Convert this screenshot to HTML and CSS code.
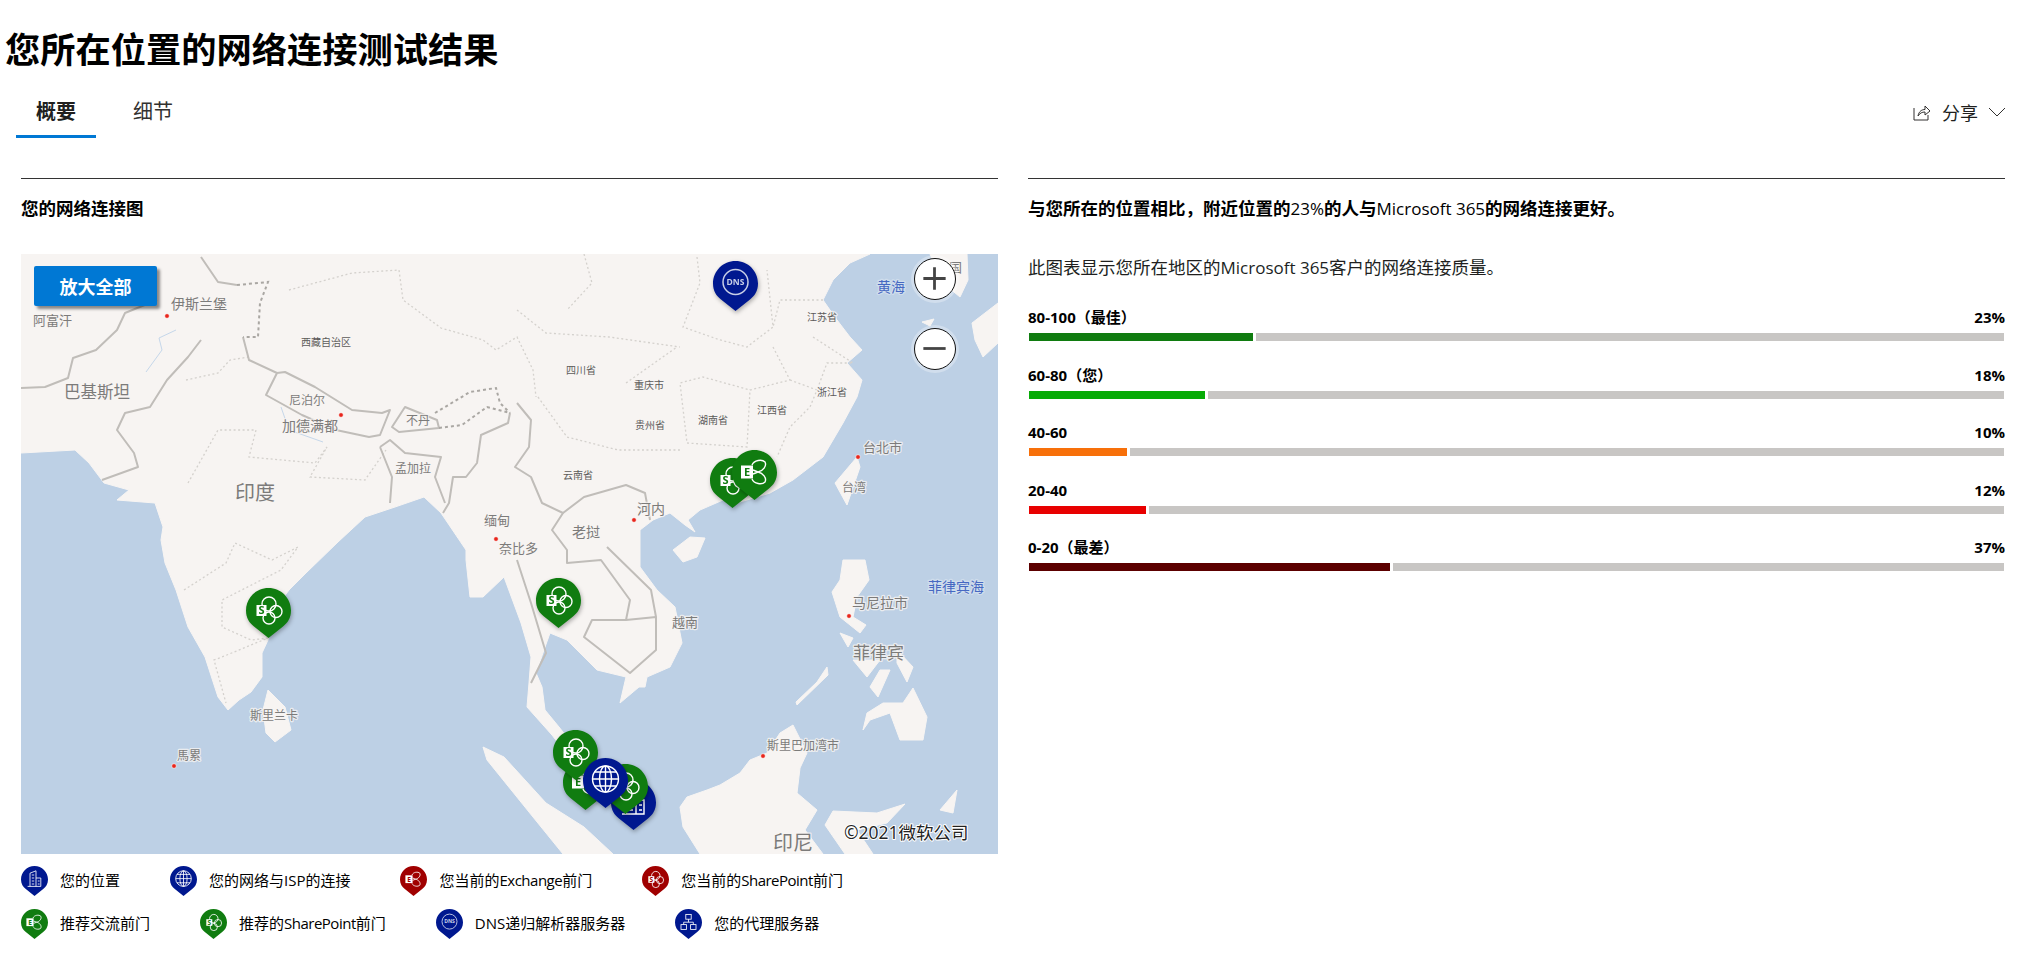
FILE: index.html
```html
<!DOCTYPE html>
<html lang="zh-CN">

<head>
    <meta charset="UTF-8">
    <meta name="viewport" content="width=device-width, initial-scale=1.0">
    <title>您所在位置的网络连接测试结果</title>
    <link rel="stylesheet" href="styles.css">
</head>

<body>
    <!-- shared pin shape and icons, used by the map and the legend -->
    <svg class="defs">
        <defs>
            <path id="pin" class="pin-shape" d="M22.5 0C35 0 45 10 45 22.5C45 30 41.500 35 37 38.500L22.500 50L8 38.500C3.500 35 0 30 0 22.500C0 10 10 0 22.500 0Z"/>
            <g id="icon-sp">
                <circle class="icon-line" cx="23" cy="16" r="7"/>
                <circle class="icon-line" cx="30" cy="23.500" r="6"/>
                <circle class="icon-line" cx="23" cy="30" r="6"/>
                <rect class="icon-fill" x="10.500" y="17" width="10" height="11"/>
                <text class="icon-letter" x="15.500" y="26">S</text>
            </g>
            <g id="icon-ex">
                <path class="icon-line" d="M20 15C22 10 30 9 33 12C35 16 31 21 26 22C31 23 35 28 33 32C30 35 22 34 20 29"/>
                <path class="icon-line" d="M26 22L21 20M26 22L21 24"/>
                <rect class="icon-fill" x="9" y="15.500" width="12" height="13"/>
                <text class="icon-letter" x="15" y="26">E</text>
            </g>
            <g id="icon-globe">
                <circle class="icon-line" cx="22.500" cy="21" r="13"/>
                <ellipse class="icon-line" cx="22.500" cy="21" rx="6" ry="13"/>
                <path class="icon-line" d="M22.500 8V34M9.500 21H35.500M11.500 14H33.500M11.500 28H33.500"/>
            </g>
            <g id="icon-dns">
                <circle class="icon-line icon-soft" cx="22.500" cy="21" r="12.500"/>
                <text class="icon-dns-text" x="22.500" y="24">DNS</text>
            </g>
            <g id="icon-building">
                <path class="icon-line" d="M15 34V12L25 8V34M25 20H33V34H11"/>
                <path class="icon-line" d="M18 15H22M18 20H22M18 25H22M18 30H22M28 25H31M28 30H31"/>
            </g>
            <g id="icon-proxy">
                <rect class="icon-line" x="18" y="9" width="9" height="8"/>
                <rect class="icon-line" x="10" y="26" width="9" height="8"/>
                <rect class="icon-line" x="26" y="26" width="9" height="8"/>
                <path class="icon-line" d="M22.500 17V22M14.500 26V22H30.500V26"/>
            </g>
        </defs>
    </svg>

    <h1 class="page-title">您所在位置的网络连接测试结果</h1>

    <div class="tabs-row">
        <div class="tabs">
            <div class="tab tab-active">概要</div>
            <div class="tab">细节</div>
        </div>
        <div class="share">
            <svg class="share-icon" viewBox="0 0 18 17">
                <path d="M1 4V16H15V11M5 12C6 7 9 5.500 12 5.500V2L17 7L12 11V8C9 8 7 9 5 12Z"/>
            </svg>
            <span>分享</span>
            <svg class="share-chevron" viewBox="0 0 18 10">
                <path d="M1 1L9 9L17 1"/>
            </svg>
        </div>
    </div>

    <div class="columns">
        <section class="col-map">
            <h2 class="col-title">您的网络连接图</h2>

            <div class="map">
                <svg class="map-svg" viewBox="21 254 977 600">
                    <g class="land">
                        <path d="M21 254L870 254L850 263L833 280L823 300L837 320L850 337L862 350L847 363L862 380L857 397L843 423L823 457L793 480L770 493L740 502L723 500L700 510L688 520L695 532L685 525L670 513L653 520L640 530L640 567L657 590L675 607L682 643L670 667L647 677L645 687L639 687L620 703L626 677L597 670L584 657L567 640L550 633L544 650L536 673L542 687L545 710L559 727L585 760L600 785L590 790L575 765L552 735L527 707L529 683L531 657L521 623L504 577L483 597L470 597L466 560L466 550L441 513L424 497L395 507L365 517L338 542L306 573L289 590L272 613L268 640L262 653L262 677L251 692L239 700L228 710L218 697L205 657L188 627L176 590L165 563L161 540L163 527L155 503L117 500L129 490L104 483L89 463L75 450L21 453Z"/>
                        <path d="M268 690L285 707L291 730L275 742L266 733L263 710Z"/>
                        <path d="M483 747L504 757L546 803L584 827L613 854L563 854L533 817L487 760Z"/>
                        <path d="M673 550L690 537L705 538L697 557L683 562Z"/>
                        <path d="M857 457L860 467L847 505L835 483Z"/>
                        <path d="M843 560L865 560L869 580L857 597L853 617L866 625L860 633L840 617L832 592L840 580Z"/>
                        <path d="M840 633L853 638L848 647Z"/>
                        <path d="M897 650L913 667L907 682L897 663Z"/>
                        <path d="M853 660L880 660L867 677Z"/>
                        <path d="M880 670L890 670L878 697L870 687Z"/>
                        <path d="M913 688L927 717L923 740L900 740L890 713L870 720L863 730L867 713L883 703L903 703Z"/>
                        <path d="M827 667L828 675L797 705L796 702L817 682Z"/>
                        <path d="M680 807L687 797L707 790L720 785L740 773L750 760L767 753L780 733L793 725L807 753L800 768L797 793L817 810L805 830L823 854L700 854L683 827Z"/>
                        <path d="M833 811L877 813L905 804L887 823L857 830L873 854L845 854L825 825Z"/>
                        <path d="M940 810L957 790L953 813Z"/>
                        <path d="M930 254L943 283L960 297L968 280L967 254Z"/>
                        <path d="M972 323L998 303L998 343L983 357L975 340Z"/>
                        <path d="M922 322L934 319L930 326Z"/>
                    </g>

                    <g class="rivers">
                        <path d="M176 330L159 338L162 350L146 372"/>
                        <path d="M281 407L289 430L323 442"/>
                    </g>

                    <g class="provinces">
                        <path d="M289 290L352 273L399 270L403 300L441 328L483 340L496 350L517 337L533 370L536 397"/>
                        <path d="M517 310L546 333L609 337L680 347M584 254L592 283L567 310"/>
                        <path d="M626 383L677 347M538 397L567 437L618 450L680 450"/>
                        <path d="M697 257L700 283L683 327L720 340L747 347L773 327L767 270"/>
                        <path d="M773 347L790 380L750 390L747 447L687 443L680 383L703 377L750 390"/>
                        <path d="M790 380L817 390L810 407L790 427L777 457M813 337L853 363L827 363L817 390"/>
                        <path d="M823 300L780 300L773 327"/>
                        <path d="M186 380L218 373L230 360L249 357M188 483L218 430L256 430L249 457L315 463L327 447L310 477L365 480L386 450"/>
                        <path d="M184 590L226 563L235 543L272 560L298 547L281 570L222 600L222 627L251 640L268 638L222 657L214 660L226 703"/>
                    </g>

                    <g class="borders">
                        <path d="M21 388L45 387L68 378L73 358L96 350L117 330L125 313L157 300"/>
                        <path d="M201 257L218 282L237 285"/>
                        <path d="M201 340L188 357L167 380L150 407L125 413L117 430L134 453L138 467L102 480"/>
                        <path d="M243 337L249 360L277 373L285 372L315 387L352 410L382 413L390 410L380 435L369 437L336 430L302 415L266 395L277 373"/>
                        <path d="M392 427L405 407L437 420L439 428L399 432Z"/>
                        <path d="M517 403L531 420L529 447L515 467L531 477L542 503L563 513L584 497L626 485L645 493L650 520"/>
                        <path d="M563 513L552 530L567 550L567 563L601 560L630 600L626 620L592 620L584 637L630 673L656 650L656 617L626 620"/>
                        <path d="M607 547L651 590L656 617"/>
                        <path d="M510 413L508 423L481 435L477 463L466 477L453 477L449 503L443 513"/>
                        <path d="M380 447L390 440L405 453L441 457L435 477L445 503M380 447L392 477L390 503"/>
                        <path d="M517 560L531 603L546 653L531 683"/>
                    </g>

                    <g class="disputed">
                        <path d="M237 285L268 282L260 303L258 337L243 337"/>
                        <path d="M439 428L462 425L487 407L510 413M435 413L470 392L496 388L500 403L510 413"/>
                    </g>

                    <g class="cities">
                        <circle cx="167" cy="316" r="2.300"/>
                        <circle cx="341" cy="415" r="2.300"/>
                        <circle cx="496" cy="539" r="2.300"/>
                        <circle cx="634" cy="520" r="2.300"/>
                        <circle cx="858" cy="457" r="2.300"/>
                        <circle cx="849" cy="616" r="2.300"/>
                        <circle cx="174" cy="766" r="2.300"/>
                        <circle cx="763" cy="756" r="2.300"/>
                    </g>

                    <text class="label size-14" x="171" y="309">伊斯兰堡</text>
                    <text class="label size-13" x="33" y="325">阿富汗</text>
                    <text class="label label-dark size-10" x="301" y="346">西藏自治区</text>
                    <text class="label size-16" x="64" y="398">巴基斯坦</text>
                    <text class="label label-dark size-10" x="566" y="374">四川省</text>
                    <text class="label label-dark size-10" x="634" y="389">重庆市</text>
                    <text class="label size-12" x="289" y="405">尼泊尔</text>
                    <text class="label size-14" x="282" y="431">加德满都</text>
                    <text class="label size-12" x="406" y="425">不丹</text>
                    <text class="label label-dark size-10" x="635" y="429">贵州省</text>
                    <text class="label size-12" x="395" y="473">孟加拉</text>
                    <text class="label label-dark size-10" x="563" y="479">云南省</text>
                    <text class="label size-20" x="235" y="500">印度</text>
                    <text class="label size-14" x="637" y="514">河内</text>
                    <text class="label size-13" x="484" y="525">缅甸</text>
                    <text class="label size-14" x="572" y="537">老挝</text>
                    <text class="label size-13" x="499" y="553">奈比多</text>
                    <text class="label size-13" x="672" y="627">越南</text>
                    <text class="label size-12" x="250" y="720">斯里兰卡</text>
                    <text class="label size-12" x="177" y="760">馬累</text>
                    <text class="label size-12" x="767" y="750">斯里巴加湾市</text>
                    <text class="label size-20" x="773" y="850">印尼</text>
                    <text class="label label-sea size-14" x="877" y="292">黄海</text>
                    <text class="label label-dark size-10" x="807" y="321">江苏省</text>
                    <text class="label label-dark size-10" x="817" y="396">浙江省</text>
                    <text class="label label-dark size-10" x="757" y="414">江西省</text>
                    <text class="label label-dark size-10" x="698" y="424">湖南省</text>
                    <text class="label size-13" x="863" y="452">台北市</text>
                    <text class="label size-12" x="842" y="492">台湾</text>
                    <text class="label size-14" x="852" y="608">马尼拉市</text>
                    <text class="label size-17" x="853" y="659">菲律宾</text>
                    <text class="label label-sea size-14" x="928" y="592">菲律宾海</text>
                    <text class="label size-13" x="936" y="272">韩国</text>
                    <text class="copyright" x="844" y="839">©2021微软公司</text>

                    <g class="map-pin pin-blue" transform="translate(713 261)"><use href="#pin"/><use href="#icon-dns"/></g>
                    <g class="map-pin pin-green" transform="translate(710 458)"><use href="#pin"/><use href="#icon-sp"/></g>
                    <g class="map-pin pin-green" transform="translate(732 450)"><use href="#pin"/><use href="#icon-ex"/></g>
                    <g class="map-pin pin-green" transform="translate(246 588)"><use href="#pin"/><use href="#icon-sp"/></g>
                    <g class="map-pin pin-green" transform="translate(536 578)"><use href="#pin"/><use href="#icon-sp"/></g>
                    <g class="map-pin pin-blue" transform="translate(611 780)"><use href="#pin"/><use href="#icon-building"/></g>
                    <g class="map-pin pin-green" transform="translate(563 760)"><use href="#pin"/><use href="#icon-ex"/></g>
                    <g class="map-pin pin-green" transform="translate(603 764)"><use href="#pin"/><use href="#icon-sp"/></g>
                    <g class="map-pin pin-green" transform="translate(553 730)"><use href="#pin"/><use href="#icon-sp"/></g>
                    <g class="map-pin pin-blue" transform="translate(583 758)"><use href="#pin"/><use href="#icon-globe"/></g>
                </svg>

                <button class="zoom-all">放大全部</button>
                <div class="zoom-btn zoom-in">
                    <svg viewBox="0 0 42 42"><path d="M9 21H33M21 9V33"/></svg>
                </div>
                <div class="zoom-btn zoom-out">
                    <svg viewBox="0 0 42 42"><path d="M9 21H33"/></svg>
                </div>
            </div>

            <div class="legend">
                <div class="legend-item">
                    <svg class="legend-pin pin-blue" viewBox="0 0 45 50"><use href="#pin"/><use href="#icon-building"/></svg>
                    <span>您的位置</span>
                </div>
                <div class="legend-item">
                    <svg class="legend-pin pin-blue" viewBox="0 0 45 50"><use href="#pin"/><use href="#icon-globe"/></svg>
                    <span>您的网络与ISP的连接</span>
                </div>
                <div class="legend-item">
                    <svg class="legend-pin pin-red" viewBox="0 0 45 50"><use href="#pin"/><use href="#icon-ex"/></svg>
                    <span>您当前的<i class="latin">Exchange</i>前门</span>
                </div>
                <div class="legend-item">
                    <svg class="legend-pin pin-red" viewBox="0 0 45 50"><use href="#pin"/><use href="#icon-sp"/></svg>
                    <span>您当前的<i class="latin">SharePoint</i>前门</span>
                </div>
                <div class="legend-item">
                    <svg class="legend-pin pin-green" viewBox="0 0 45 50"><use href="#pin"/><use href="#icon-ex"/></svg>
                    <span>推荐交流前门</span>
                </div>
                <div class="legend-item">
                    <svg class="legend-pin pin-green" viewBox="0 0 45 50"><use href="#pin"/><use href="#icon-sp"/></svg>
                    <span>推荐的<i class="latin">SharePoint</i>前门</span>
                </div>
                <div class="legend-item">
                    <svg class="legend-pin pin-blue" viewBox="0 0 45 50"><use href="#pin"/><use href="#icon-dns"/></svg>
                    <span>DNS递归解析器服务器</span>
                </div>
                <div class="legend-item">
                    <svg class="legend-pin pin-blue" viewBox="0 0 45 50"><use href="#pin"/><use href="#icon-proxy"/></svg>
                    <span>您的代理服务器</span>
                </div>
            </div>
        </section>

        <section class="col-quality">
            <h2 class="col-title">与您所在的位置相比，附近位置的<span class="plain">23%</span>的人与<span class="plain">Microsoft 365</span>的网络连接更好。</h2>
            <p class="intro">此图表显示您所在地区的<span class="plain">Microsoft 365</span>客户的网络连接质量。</p>

            <div class="score">
                <div class="score-head"><span>80-100（最佳）</span><span>23%</span></div>
                <div class="score-bar"><div class="score-fill fill-best" style="width: 23%"></div><div class="score-rest"></div></div>
            </div>
            <div class="score">
                <div class="score-head"><span>60-80（您）</span><span>18%</span></div>
                <div class="score-bar"><div class="score-fill fill-good" style="width: 18%"></div><div class="score-rest"></div></div>
            </div>
            <div class="score">
                <div class="score-head"><span>40-60</span><span>10%</span></div>
                <div class="score-bar"><div class="score-fill fill-mid" style="width: 10%"></div><div class="score-rest"></div></div>
            </div>
            <div class="score">
                <div class="score-head"><span>20-40</span><span>12%</span></div>
                <div class="score-bar"><div class="score-fill fill-low" style="width: 12%"></div><div class="score-rest"></div></div>
            </div>
            <div class="score">
                <div class="score-head"><span>0-20（最差）</span><span>37%</span></div>
                <div class="score-bar"><div class="score-fill fill-worst" style="width: 37%"></div><div class="score-rest"></div></div>
            </div>
        </section>
    </div>
</body>

</html>
```

FILE: styles.css
```css
* {
    margin: 0;
    padding: 0;
    box-sizing: border-box;
}

body {
    background-color: #fff;
    color: #000;
    font-family: "Open Sans", "Noto Sans CJK SC", sans-serif;
    overflow: hidden;
}

.defs {
    display: none;
}

.page-title {
    margin: 26px 0 0 5px;
    font-size: 35.250px;
    line-height: 46px;
    font-weight: 700;
}

.tabs-row {
    display: flex;
    justify-content: space-between;
    margin: 20px 18px 0 16px;
}

.tabs {
    display: flex;
    gap: 17px;
}

.tab {
    padding: 6px 20px 12px 20px;
    font-size: 20px;
    line-height: 28px;
    color: #323130;
}

.tab-active {
    padding-bottom: 9px;
    border-bottom: 3px solid #0078d4;
    font-weight: 600;
    color: #201f1e;
}

.share {
    display: flex;
    align-items: center;
    height: 40px;
    font-size: 18px;
    color: #201f1e;
}

.share-icon {
    width: 18px;
    height: 17px;
    margin-right: 11px;
    fill: none;
    stroke: #323130;
    stroke-width: 1;
}

.share-chevron {
    width: 18px;
    height: 10px;
    margin-left: 10px;
    fill: none;
    stroke: #323130;
    stroke-width: 1;
}

.columns {
    display: flex;
    gap: 30px;
    margin: 40px 19px 0 21px;
}

.col-map {
    width: 977px;
    flex: none;
    border-top: 1px solid #333;
}

.col-quality {
    flex: 1;
    border-top: 1px solid #333;
}

.col-title {
    padding-top: 17px;
    font-size: 17.500px;
    line-height: 24px;
    font-weight: 700;
}

.plain {
    font-size: 17px;
    font-weight: 400;
}

/* map */
.map {
    position: relative;
    width: 977px;
    height: 600px;
    margin-top: 34px;
    background-color: #bdd0e5;
}

.map-svg {
    display: block;
    width: 977px;
    height: 600px;
}

.land {
    filter: blur(0.6px);
}

.land path {
    fill: #f7f4f2;
    stroke: #f7f4f2;
    stroke-width: 1;
    stroke-linejoin: round;
}

.rivers path {
    fill: none;
    stroke: #c5d7ea;
    stroke-width: 1;
}

.provinces {
    filter: blur(0.4px);
}

.provinces path {
    fill: none;
    stroke: #d4d1cd;
    stroke-width: 1.300;
    stroke-dasharray: 2 2.500;
}

.borders {
    filter: blur(0.6px);
}

.borders path {
    fill: none;
    stroke: #c0bdb9;
    stroke-width: 2;
    stroke-linejoin: round;
}

.disputed {
    filter: blur(0.4px);
}

.disputed path {
    fill: none;
    stroke: #aaa7a3;
    stroke-width: 2;
    stroke-dasharray: 3 3;
}

.cities circle {
    fill: #e8261c;
    stroke: #fff;
    stroke-opacity: 0.7;
    stroke-width: 0.800;
}

.label {
    fill: #7c7b7a;
    stroke: #f7f4f2;
    stroke-width: 2.500;
    stroke-opacity: 0.8;
    paint-order: stroke;
    stroke-linejoin: round;
}

.label-dark {
    fill: #5c5b5a;
}

.label-sea {
    fill: #4668c2;
    stroke: #d5e1ee;
}

.size-10 { font-size: 10px; }
.size-12 { font-size: 12px; }
.size-13 { font-size: 13px; }
.size-14 { font-size: 14px; }
.size-16 { font-size: 16.500px; }
.size-17 { font-size: 17px; }
.size-20 { font-size: 20px; }

.copyright {
    font-size: 17.500px;
    fill: #222;
    stroke: #fff;
    stroke-width: 2;
    paint-order: stroke;
    stroke-linejoin: round;
}

.map-pin {
    filter: drop-shadow(1px 2px 2px rgba(0, 0, 0, 0.3));
}

.pin-shape {
    fill: var(--pin);
}

.pin-blue { --pin: #00188f; }
.pin-green { --pin: #107c10; }
.pin-red { --pin: #a00000; }

.icon-line {
    fill: none;
    stroke: #fff;
    stroke-width: 1.400;
}

.icon-soft {
    stroke: #c8cfe6;
    stroke-width: 1.500;
}

.icon-fill {
    fill: #fff;
}

.icon-letter {
    fill: var(--pin);
    font-size: 11px;
    font-weight: 700;
    text-anchor: middle;
}

.icon-dns-text {
    fill: #c8cfe6;
    font-size: 8.500px;
    font-weight: 700;
    text-anchor: middle;
}

.zoom-all {
    position: absolute;
    left: 13px;
    top: 12px;
    width: 123px;
    height: 40px;
    border: none;
    border-radius: 2px;
    background-color: #0078d4;
    box-shadow: 3px 3px 3px rgba(0, 0, 0, 0.45);
    color: #fff;
    font-family: inherit;
    font-size: 18px;
    font-weight: 700;
}

.zoom-btn {
    position: absolute;
    left: 893px;
    width: 42px;
    height: 42px;
    border: 1.500px solid #111;
    border-radius: 50%;
    background-color: #fff;
    box-shadow: 0 0 0 3px rgba(255, 255, 255, 0.3);
}

.zoom-in { top: 4px; }
.zoom-out { top: 74px; }

.zoom-btn svg {
    display: block;
    width: 39px;
    height: 39px;
    fill: none;
    stroke: #444;
    stroke-width: 3;
}

/* legend */
.legend {
    display: flex;
    flex-wrap: wrap;
    gap: 13px 50px;
    margin-top: 12px;
}

.legend-item {
    display: flex;
    align-items: center;
    gap: 12px;
    height: 30px;
    font-size: 15px;
}

.legend-item span {
    padding-bottom: 3px;
}

.latin {
    font-style: normal;
    letter-spacing: -0.500px;
}

.legend-pin {
    width: 27px;
    height: 30px;
}

/* score bars */
.intro {
    margin-top: 34px;
    margin-bottom: 27px;
    font-size: 17.500px;
    line-height: 24px;
    color: #201f1e;
}

.score {
    margin-bottom: 23.500px;
}

.score-head {
    display: flex;
    justify-content: space-between;
    margin-bottom: 6px;
    font-size: 15px;
    line-height: 20px;
    font-weight: 700;
}

.score-bar {
    display: flex;
    gap: 3px;
    height: 8px;
    padding: 0 1px;
}

.score-rest {
    flex: 1;
    background-color: #c8c6c4;
}

.fill-best { background-color: #107c10; }
.fill-good { background-color: #07ab07; }
.fill-mid { background-color: #f7700a; }
.fill-low { background-color: #e80000; }
.fill-worst { background-color: #5c0000; }
```
